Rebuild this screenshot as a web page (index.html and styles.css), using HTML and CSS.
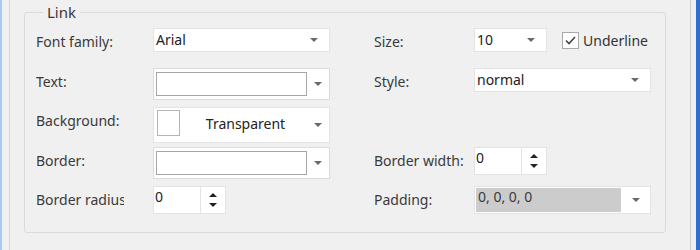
FILE: index.html
```html
<!DOCTYPE html>
<html lang="en">
<head>
    <meta charset="UTF-8">
    <title>Link properties</title>
    <link rel="stylesheet" href="styles.css">
</head>
<body>
    <div class="window">
        <div class="pane">
            <fieldset class="group">
                <legend>Link</legend>
                <div class="form">
                    <!-- row 1 -->
                    <div class="label">Font family:</div>
                    <div class="combo"><span class="value">Arial</span><span class="caret"></span></div>
                    <div class="spacer"></div>
                    <div class="label">Size:</div>
                    <div class="size-row">
                        <div class="combo small"><span class="value">10</span><span class="caret"></span></div>
                        <label class="check">
                            <span class="box">
                                <svg width="11" height="9" viewBox="0 0 11 9"><polyline points="1,4.5 4,7.5 10,1" fill="none" stroke="#444" stroke-width="1.6"/></svg>
                            </span>Underline
                        </label>
                    </div>

                    <!-- row 2 -->
                    <div class="label">Text:</div>
                    <div class="combo framed"><span class="field"></span><span class="caret"></span></div>
                    <div class="spacer"></div>
                    <div class="label">Style:</div>
                    <div class="combo"><span class="value">normal</span><span class="caret"></span></div>

                    <!-- row 3 -->
                    <div class="label">Background:</div>
                    <div class="combo colour"><span class="swatch"></span><span class="value centered">Transparent</span><span class="caret"></span></div>
                    <div class="spacer"></div>
                    <div class="label"></div>
                    <div></div>

                    <!-- row 4 -->
                    <div class="label">Border:</div>
                    <div class="combo framed"><span class="field"></span><span class="caret"></span></div>
                    <div class="spacer"></div>
                    <div class="label">Border width:</div>
                    <div class="spin"><span class="value">0</span><span class="arrows"><i class="up"></i><i class="down"></i></span></div>

                    <!-- row 5 -->
                    <div class="label clip">Border radius</div>
                    <div class="spin"><span class="value">0</span><span class="arrows"><i class="up"></i><i class="down"></i></span></div>
                    <div class="spacer"></div>
                    <div class="label">Padding:</div>
                    <div class="combo disabled"><span class="value">0, 0, 0, 0</span><span class="caret"></span></div>
                </div>
            </fieldset>
        </div>
    </div>
</body>
</html>
```

FILE: styles.css
```css
* {
    margin: 0;
    padding: 0;
    box-sizing: border-box;
}

body {
    font-family: 'Noto Sans', 'Open Sans', sans-serif;
    font-size: 14px;
    color: #3a3a3a;
    background: #f0f0f0;
    width: 700px;
    height: 250px;
    overflow: hidden;
}

.window {
    height: 250px;
    border-left: 2px solid #a9caf0;
    border-right: 4px solid #2f6fd0;
}

.pane {
    height: 100%;
    margin: 0 5px 0 7px;
    border-left: 1px solid #d6d6d6;
    border-right: 1px solid #cfcfcf;
    padding: 2px 24px 0 14px;
}

.group {
    border: 1px solid #dadada;
    border-radius: 3px;
    padding: 6px 0 18px 11px;
    height: 231px;
}

.group legend {
    margin-left: 7px;
    padding: 0 4px;
    line-height: 20px;
    font-size: 15px;
}

.form {
    display: grid;
    grid-template-columns: 117px 177px 44px 100px 177px;
    grid-template-rows: 40px 39px 40px 39px 28px;
    align-items: start;
}

.label {
    line-height: 20px;
    padding-top: 4px;
    white-space: nowrap;
    overflow: hidden;
}

.label.clip {
    width: 88px;
}

.combo {
    display: flex;
    align-items: center;
    height: 24px;
    background: #fff;
    border: 1px solid #e3e3e3;
    color: #222;
}

.combo .value {
    flex: 1;
    padding-left: 2px;
    line-height: 20px;
}

.combo .caret {
    width: 30px;
    height: 100%;
    display: flex;
    align-items: center;
    justify-content: center;
}

.combo .caret::after {
    content: "";
    border-left: 4px solid transparent;
    border-right: 4px solid transparent;
    border-top: 4px solid #6a6a6a;
}

.combo.small {
    width: 73px;
}

.combo.framed {
    height: 32px;
    border-color: #dcdcdc;
}

.combo.framed .field {
    width: 152px;
    height: 24px;
    margin-left: 2px;
    border: 1px solid #a6a6a6;
    background: #fff;
}

.combo.framed .caret,
.combo.colour .caret {
    width: 22px;
}

.combo.colour {
    height: 36px;
    align-items: flex-start;
}

.combo.colour .swatch {
    width: 23px;
    height: 26px;
    margin: 2px 0 0 3px;
    border: 1px solid #b4b4b4;
    background: #fff;
}

.combo.colour .value.centered {
    text-align: center;
    padding: 6px 0 0 4px;
}

.combo.colour .caret {
    height: 34px;
}

.combo.disabled {
    height: 28px;
    padding: 1px 0 1px 1px;
}

.combo.disabled .value {
    align-self: stretch;
    background: #cccccc;
    color: #3a3a3a;
    padding-left: 2px;
    line-height: 18px;
}

.combo.disabled .caret {
    width: 29px;
}

.size-row {
    display: flex;
    align-items: center;
}

.check {
    display: flex;
    align-items: center;
    margin-left: 15px;
    color: #333;
}

.check .box {
    width: 17px;
    height: 17px;
    border: 1px solid #a9a9a9;
    background: #fff;
    margin-right: 4px;
    display: flex;
    align-items: center;
    justify-content: center;
}

.spin {
    display: flex;
    width: 73px;
    height: 28px;
    background: #fff;
    border: 1px solid #e3e3e3;
    color: #222;
}

.spin .value {
    width: 47px;
    padding-left: 1px;
    line-height: 20px;
    border-right: 1px solid #e3e3e3;
}

.spin .arrows {
    flex: 1;
    display: flex;
    flex-direction: column;
    align-items: center;
    justify-content: center;
    gap: 6px;
}

.spin .up {
    border-left: 4px solid transparent;
    border-right: 4px solid transparent;
    border-bottom: 4px solid #222;
}

.spin .down {
    border-left: 4px solid transparent;
    border-right: 4px solid transparent;
    border-top: 4px solid #222;
}
```
